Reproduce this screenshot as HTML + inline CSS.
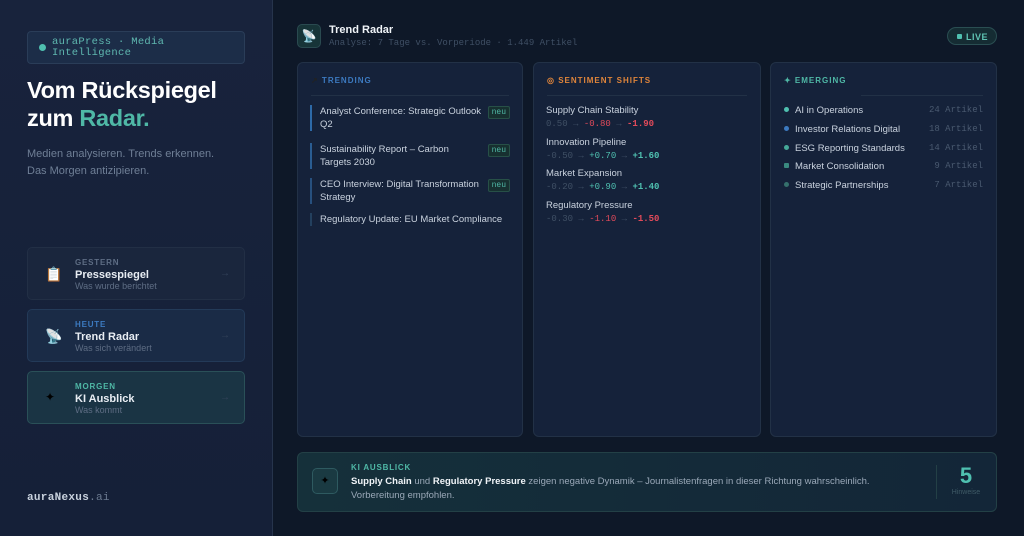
<!DOCTYPE html>
<html><head><meta charset="utf-8"><style>
*{box-sizing:border-box;margin:0;padding:0}
body{width:1024px;height:536px;overflow:hidden;background:#0e1828;font-family:"Liberation Sans",sans-serif;color:#dfe6ee;position:relative}
.mono{font-family:"Liberation Mono",monospace}
.side{position:absolute;left:0;top:0;width:273px;height:536px;background:linear-gradient(180deg,#18233c,#152038);border-right:1px solid #26344c}
.tag{position:absolute;left:27px;top:31px;width:218px;height:33px;background:#1c2d48;border:1px solid #2a3d58;border-radius:4px;padding:5px 0 0 24px;font-size:10.5px;line-height:11px;color:#5fb8b0;letter-spacing:.3px}
.tag:before{content:"";position:absolute;left:11px;top:12px;width:7px;height:7px;border-radius:50%;background:#4fc0b0}
h1{position:absolute;left:27px;top:76px;font-size:23.5px;line-height:28px;color:#fff;font-weight:bold;letter-spacing:-.3px}
h1 span{color:#4fb8a6}
.sub{position:absolute;left:27px;top:146px;font-size:11px;line-height:17px;color:#6f7f96}
.card{position:absolute;left:27px;width:218px;height:53px;border-radius:5px;border:1px solid #222f45;background:#1a263d}
.card .ic{position:absolute;left:17px;top:18px;font-size:14px}
.card .l{position:absolute;left:47px;top:10px;font-size:8px;font-weight:bold;letter-spacing:.8px;color:#5e6d84}
.card .t{position:absolute;left:47px;top:21px;font-size:11px;font-weight:bold;color:#e8edf3}
.card .d{position:absolute;left:47px;top:33px;font-size:9px;color:#5e6d84}
.card .a{position:absolute;right:14px;top:20px;font-size:10px;color:#34435a}
.foot{position:absolute;left:27px;top:492px;font-size:11px;font-weight:bold;color:#c9d2de;letter-spacing:.3px}
.foot span{font-weight:normal;color:#6b7a90}
.hic{position:absolute;left:297px;top:24px;width:24px;height:24px;border-radius:5px;background:#173438;border:1px solid #2a4a50;font-size:12px;text-align:center;line-height:22px}
.ht{position:absolute;left:329px;top:24px;font-size:11px;font-weight:bold;color:#f0f4f8}
.hs{position:absolute;left:329px;top:38px;font-size:9px;color:#3f4f64}
.live{position:absolute;left:947px;top:27px;width:50px;height:18px;border-radius:9px;border:1px solid #2a4e52;background:#152c33;font-size:9px;font-weight:bold;color:#5fc3b3;padding:4px 0 0 18px;letter-spacing:.5px}
.live:before{content:"";position:absolute;left:9px;top:6px;width:5px;height:5px;background:#4fc0b0;border-radius:1px}
.panel{position:absolute;top:62px;height:375px;border-radius:6px;border:1px solid #223146;background:#15223a}
.ph{position:absolute;left:13px;top:13px;font-size:8px;font-weight:bold;letter-spacing:1px}
.line{position:absolute;left:13px;right:13px;top:32px;height:1px;background:#223146}
.ti{position:absolute;left:12px;width:200px;border-left:2px solid #2d6aa8;padding-left:8px;font-size:9.5px;line-height:13px;color:#c9d2de;white-space:nowrap}
.neu{position:absolute;right:0;top:1px;font-family:"Liberation Mono",monospace;font-size:8px;color:#4fb8a6;border:1px solid #275047;background:#173030;border-radius:2px;padding:0 3px;line-height:11px}
.si{position:absolute;left:12px;font-size:9.5px;color:#c9d2de}
.si div{font-family:"Liberation Mono",monospace;font-size:9px;margin-top:3px;color:#3f4f64}
.r{color:#e04a5a}.g{color:#4fc0b0}
.em{position:absolute;left:13px;right:13px;font-size:9.5px;color:#c9d2de}
.em i{display:inline-block;width:5px;height:5px;border-radius:50%;margin-right:6px;vertical-align:1px}
.em span{position:absolute;right:0;font-family:"Liberation Mono",monospace;font-size:9px;color:#4a5a70}
.ki{position:absolute;left:297px;top:452px;width:700px;height:60px;border-radius:6px;border:1px solid #234046;background:linear-gradient(90deg,#15303a,#132638)}
</style></head><body>
<div class="side">
<div class="tag mono">auraPress · Media<br>Intelligence</div>
<h1>Vom Rückspiegel<br>zum <span>Radar.</span></h1>
<div class="sub">Medien analysieren. Trends erkennen.<br>Das Morgen antizipieren.</div>
<div class="card" style="top:247px"><div class="ic">📋</div><div class="l">GESTERN</div><div class="t">Pressespiegel</div><div class="d">Was wurde berichtet</div><div class="a">→</div></div>
<div class="card" style="top:309px;background:#1a2b46;border-color:#233a58"><div class="ic">📡</div><div class="l" style="color:#3c7ac0">HEUTE</div><div class="t">Trend Radar</div><div class="d">Was sich verändert</div><div class="a">→</div></div>
<div class="card" style="top:371px;background:#1a3444;border-color:#2a5058"><div class="ic" style="color:#000;font-size:12px">✦</div><div class="l" style="color:#4fb8a6">MORGEN</div><div class="t">KI Ausblick</div><div class="d">Was kommt</div><div class="a">→</div></div>
<div class="foot mono">auraNexus<span>.ai</span></div>
</div>
<div class="hic">📡</div>
<div class="ht">Trend Radar</div>
<div class="hs mono">Analyse: 7 Tage vs. Vorperiode · 1.449 Artikel</div>
<div class="live">LIVE</div>

<div class="panel" style="left:297px;width:226px">
<div class="ph" style="color:#3c7ac0"><span style="color:#222">↗</span> TRENDING</div><div class="line"></div>
<div class="ti" style="top:42px">Analyst Conference: Strategic Outlook<br>Q2<span class="neu">neu</span></div>
<div class="ti" style="top:80px;border-color:#2a5d92">Sustainability Report – Carbon<br>Targets 2030<span class="neu">neu</span></div>
<div class="ti" style="top:115px;border-color:#27507e">CEO Interview: Digital Transformation<br>Strategy<span class="neu">neu</span></div>
<div class="ti" style="top:150px;border-color:#23405e">Regulatory Update: EU Market Compliance</div>
</div>

<div class="panel" style="left:533px;width:228px">
<div class="ph" style="color:#e0853a">◎ SENTIMENT SHIFTS</div><div class="line"></div>
<div class="si" style="top:42px">Supply Chain Stability<div>0.50 → <span class="r">-0.80</span> → <b class="r">-1.90</b></div></div>
<div class="si" style="top:74px">Innovation Pipeline<div>-0.50 → <span class="g">+0.70</span> → <b class="g">+1.60</b></div></div>
<div class="si" style="top:105px">Market Expansion<div>-0.20 → <span class="g">+0.90</span> → <b class="g">+1.40</b></div></div>
<div class="si" style="top:137px">Regulatory Pressure<div>-0.30 → <span class="r">-1.10</span> → <b class="r">-1.50</b></div></div>
</div>

<div class="panel" style="left:770px;width:227px">
<div class="ph" style="color:#4fb8a6">✦ EMERGING</div><div class="line" style="left:90px"></div>
<div class="em" style="top:42px"><i style="background:#4fc0b0"></i>AI in Operations<span>24 Artikel</span></div>
<div class="em" style="top:61px"><i style="background:#3c7ac0"></i>Investor Relations Digital<span>18 Artikel</span></div>
<div class="em" style="top:80px"><i style="background:#45a898"></i>ESG Reporting Standards<span>14 Artikel</span></div>
<div class="em" style="top:98px"><i style="background:#3a8a80;border-radius:1px"></i>Market Consolidation<span>9 Artikel</span></div>
<div class="em" style="top:117px"><i style="background:#35706c"></i>Strategic Partnerships<span>7 Artikel</span></div>
</div>

<div class="ki">
<div style="position:absolute;left:14px;top:15px;width:26px;height:26px;border-radius:5px;border:1px solid #2e5a60;background:#1a3a42;text-align:center;line-height:24px;font-size:11px;color:#000">✦</div>
<div style="position:absolute;left:53px;top:10px;font-size:8px;font-weight:bold;letter-spacing:.8px;color:#4fb8a6">KI AUSBLICK</div>
<div style="position:absolute;left:53px;top:22px;width:560px;font-size:9.5px;line-height:14px;color:#9aa8b8"><b style="color:#f0f4f8">Supply Chain</b> und <b style="color:#f0f4f8">Regulatory Pressure</b> zeigen negative Dynamik – Journalistenfragen in dieser Richtung wahrscheinlich. Vorbereitung empfohlen.</div>
<div style="position:absolute;left:638px;top:12px;width:1px;height:34px;background:#234046"></div>
<div style="position:absolute;left:650px;top:10px;width:36px;text-align:center;font-size:22px;font-weight:bold;color:#4fc0b0;line-height:26px">5</div>
<div style="position:absolute;left:646px;top:36px;width:44px;text-align:center;font-size:7px;color:#3f5a66">Hinweise</div>
</div>
</body></html>
